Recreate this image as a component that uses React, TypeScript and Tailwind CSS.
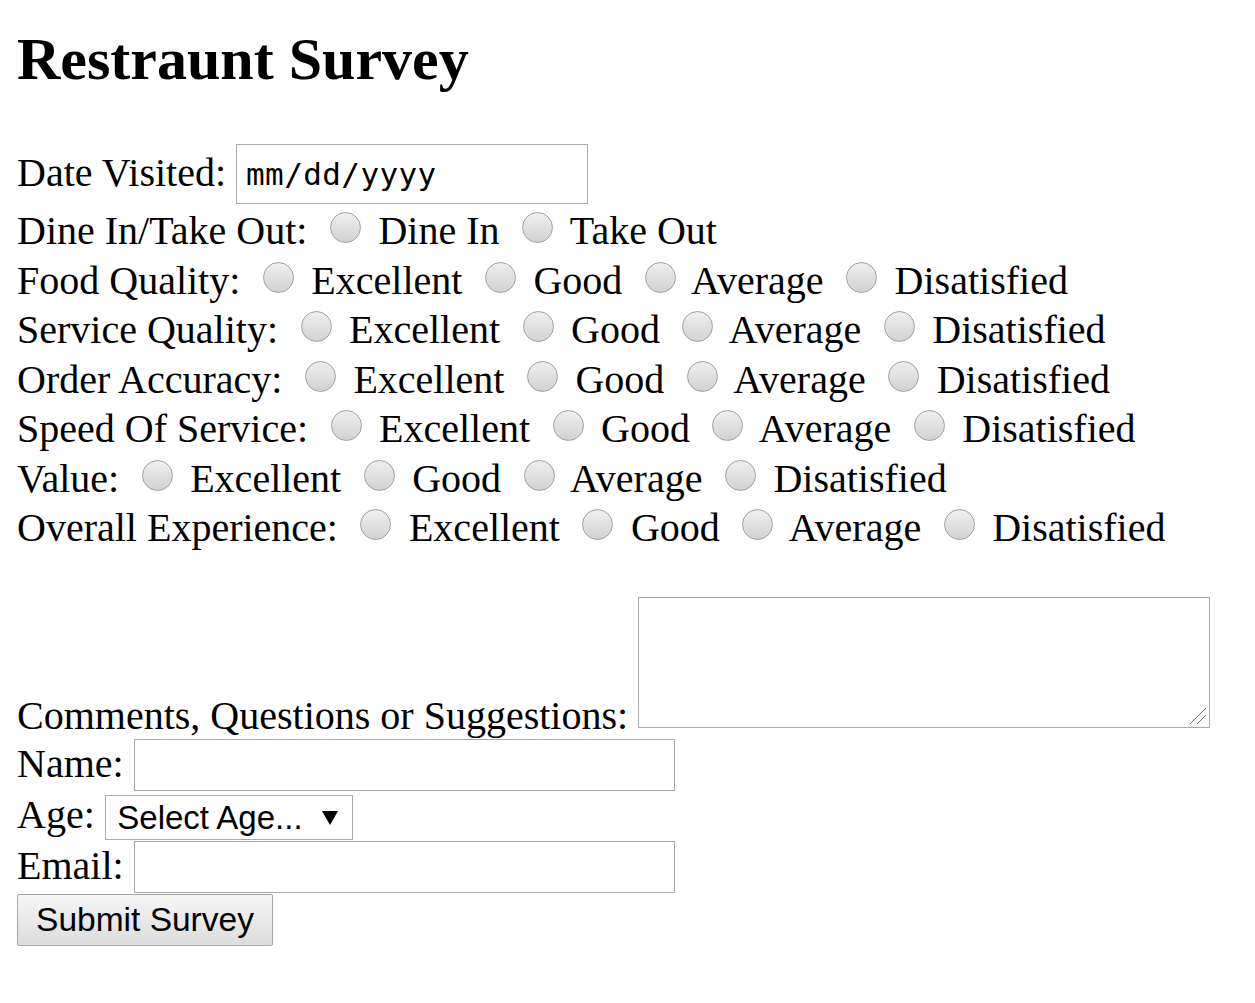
import React, { Fragment } from "react";

const opts = ["Excellent", "Good", "Average", "Disatisfied"];

function Radio() {
  return (
    <span className="inline-block align-baseline w-[31px] h-[31px] ml-[12.5px] mr-[7.5px] mt-[8px] mb-[0.5px] rounded-full border border-[#a0a0a0] bg-linear-to-b from-[#efefef] to-[#d2d2d2]" />
  );
}

function RadioRow({ label, options }: { label: string; options: string[] }) {
  return (
    <div className="whitespace-nowrap">
      {label}
      {options.map((o) => (
        <Fragment key={o}>
          {" "}
          <Radio />
          {" "}
          {o}
        </Fragment>
      ))}
    </div>
  );
}

export default function App() {
  return (
    <div className="min-h-screen bg-white text-black pl-[17px] font-['Liberation_Serif',serif] text-[40px] leading-[normal]">
      <h1 className="pt-[25px] mb-[50px] text-[60px] font-bold leading-[normal]">Restraunt Survey</h1>

      <div className="flex items-start h-[60px]">
        <span className="mt-[4.5px] whitespace-nowrap">Date Visited:</span>
        <div className="ml-[10px] w-[352px] h-[60px] border border-[#a9a9a9] pl-[9px] pt-[13.8px] font-['DejaVu_Sans_Mono',monospace] text-[31px] leading-none tracking-[0.4px]">
          mm/dd/yyyy
        </div>
      </div>

      <RadioRow label="Dine In/Take Out:" options={["Dine In", "Take Out"]} />
      <RadioRow label="Food Quality:" options={opts} />
      <RadioRow label="Service Quality:" options={opts} />
      <RadioRow label="Order Accuracy:" options={opts} />
      <RadioRow label="Speed Of Service:" options={opts} />
      <RadioRow label="Value:" options={opts} />
      <RadioRow label="Overall Experience:" options={opts} />

      <div className="mt-[46.5px] flex items-end">
        <span className="whitespace-nowrap">Comments, Questions or Suggestions:</span>
        <div className="relative ml-[10px] mb-[11px] w-[572px] h-[131px] border border-[#a9a9a9] bg-white">
          <svg className="absolute right-[2px] bottom-[2px]" width="20" height="20" viewBox="0 0 20 20">
            <line x1="19" y1="3" x2="3" y2="19" stroke="#6b6b6b" strokeWidth="1" />
            <line x1="19" y1="10" x2="10" y2="19" stroke="#6b6b6b" strokeWidth="1" />
          </svg>
        </div>
      </div>

      <div className="flex items-start h-[52px]">
        <span className="mt-[0.5px] whitespace-nowrap">Name:</span>
        <div className="ml-[10.5px] w-[541px] h-[52px] border border-[#a9a9a9] bg-white" />
      </div>

      <div className="flex items-start h-[49px]">
        <span className="whitespace-nowrap">Age:</span>
        <div className="ml-[10.5px] mt-[4px] w-[248px] h-[45px] border border-[#a9a9a9] bg-white flex items-center pl-[11px] pr-[14px] font-['Liberation_Sans',Arial,sans-serif] text-[33px] leading-[normal]">
          <span className="whitespace-nowrap">Select Age...</span>
          <svg className="ml-auto" width="16" height="14" viewBox="0 0 16 14">
            <polygon points="0,0 16,0 8,14" fill="#000" />
          </svg>
        </div>
      </div>

      <div className="mt-[1px] flex items-start h-[52px]">
        <span className="mt-[0.5px] whitespace-nowrap">Email:</span>
        <div className="ml-[10.5px] w-[541px] h-[52px] border border-[#a9a9a9] bg-white" />
      </div>

      <div className="mt-[1px]">
        <div className="w-[256px] h-[52px] border border-[#a6a6a6] rounded-[2px] bg-linear-to-b from-[#f6f6f6] to-[#dcdcdc] flex items-center justify-center font-['Liberation_Sans',Arial,sans-serif] text-[33.5px] leading-[normal] whitespace-nowrap">
          Submit Survey
        </div>
      </div>
    </div>
  );
}
